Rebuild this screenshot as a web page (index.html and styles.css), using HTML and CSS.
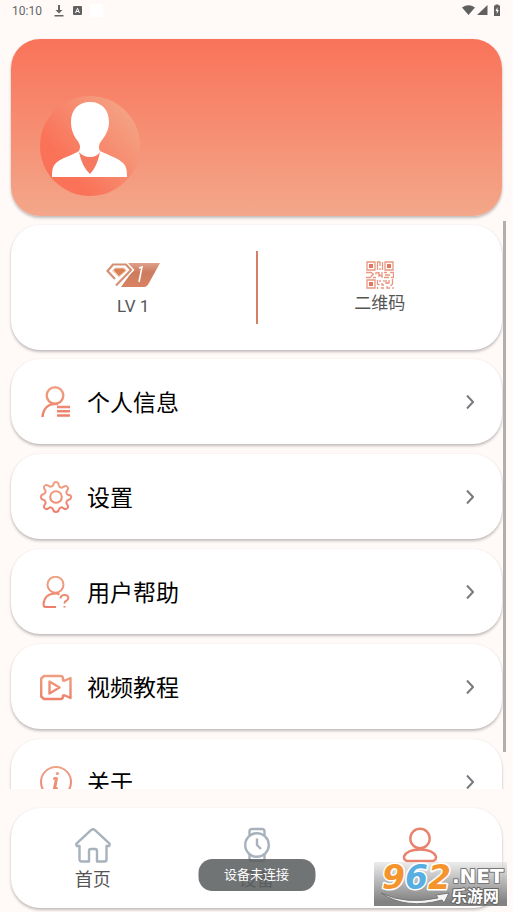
FILE: index.html
```html
<!DOCTYPE html>
<html lang="zh-CN">
<head>
<meta charset="utf-8">
<meta name="viewport" content="width=device-width, initial-scale=1">
<title>我的</title>
<link rel="stylesheet" href="styles.css">
</head>
<body>
<svg class="defs" width="0" height="0" aria-hidden="true">
  <defs>
    <linearGradient id="coral" gradientUnits="userSpaceOnUse" x1="0" y1="0" x2="0" y2="32"><stop offset="0" stop-color="#efa386"/><stop offset="1" stop-color="#ee7d69"/></linearGradient>
    <linearGradient id="disc" x1="0.2" y1="0.75" x2="0.9" y2="0.2"><stop offset="0.1" stop-color="#fa7359"/><stop offset="1" stop-color="#f4a183"/></linearGradient>
    <linearGradient id="badge" x1="0" y1="0" x2="0" y2="1"><stop offset="0" stop-color="#dfa08a"/><stop offset="0.4" stop-color="#cc7b5e"/><stop offset="1" stop-color="#d98363"/></linearGradient>
  </defs>
</svg>
<div class="app">
  <header class="status">
    <span class="time">10:10</span>
    <svg class="status-download" width="10" height="12" viewBox="0 0 10 12" fill="#666"><path d="M4 0h2v5h2.500L5 8.500 1.500 5H4zM.5 10h9v1.500h-9z"/></svg>
    <svg class="status-app" width="9" height="9" viewBox="0 0 9 9"><rect width="9" height="9" rx="1" fill="#606060"/><path d="M2.500 7 4.500 2.300 6.500 7M3.200 5.500h2.600" fill="none" stroke="#fff"/></svg>
    <span class="status-blank"></span>
    <svg class="status-system" width="39" height="13" viewBox="0 0 39 13" fill="#606060"><path d="M0 3.500Q6.500-1 13 3.500L6.500 11zM15 11 25.500 1v10z"/><path d="M33.500 1.500V.5h3v1H38V12h-6V1.500z"/><path d="M35.500 3 33.500 7h1.300v3l2-4h-1.300z" fill="#fff"/></svg>
  </header>

  <section class="card profile">
    <svg class="avatar" width="100" height="100" viewBox="0 0 100 100" role="img" aria-label="头像">
      <circle cx="50" cy="50" r="50" fill="url(#disc)"/>
      <path fill="#fff" d="M50 6C38 6 31 14 31 26c0 8 3 14 6 18 3 4 4 7 2 11-8 5-18 7-23 12-3 3-4 6-4 14h75c0-8-1-11-4-14-5-5-15-8-23-12-2-4-1-7 2-11 3-4 7-10 7-18C69 14 62 6 50 6z"/>
      <path fill="#f57a61" d="M39 56q4 5 11 5t10-5Q57 71 50 78 42 71 39 56z"/>
    </svg>
  </section>

  <main class="content">
    <div class="scroll">
      <section class="card summary">
        <div class="summary-item level">
          <svg width="54" height="24" viewBox="0 0 54 24" role="img" aria-label="等级 1">
            <path fill="url(#badge)" d="M22 0h32L43 20q-2 4-5 4H15l10-14z"/>
            <path d="M9 16 1.500 8 7 1.500h13L25 7 10 22.500" fill="none" stroke="#fff" stroke-width="5"/>
            <path d="M9 16 1.500 8 7 1.500h13L25 7 10 22.500" fill="none" stroke="#d78f75" stroke-width="2.200"/>
            <path d="M6 8 9 4.500h9L21 7.500l-8 7z" fill="#f3d2c4"/>
            <path d="M7.500 7 9.500 5.500h8l2 2L13 13z" fill="#db8150"/>
            <path d="m33 5 3-1-3 15" fill="none" stroke="#fff" stroke-width="1.600"/>
          </svg>
          <span>LV 1</span>
        </div>
        <div class="divider"></div>
        <a class="summary-item qr" href="#qr">
          <svg width="28" height="28" viewBox="0 0 28 28" fill="none" stroke="#e99780" stroke-width="1.300">
            <path d="M1 1h8v8H1zM19 1h8v8h-8zM1 19h8v8H1z"/>
            <path d="M4 4h2v2H4zM22 4h2v2h-2zM4 22h2v2H4z" stroke="#e2765e" stroke-width="2"/>
            <path d="M11.500 9V1H14v4M16.500 1v8M14 7v2M0 11.500h5l3 2M10 11v2.500M0 16.500h4l3-3M7 16.500h3M13 11v5M11 11l5 5v-5M18 11.500h3M18 16.500h5M19 14h5M24 11.500h3.500v5H25M11.500 19v4l2 1M11.500 26v2M14 19v2M16 22v2h2M15 27h3M18 19v2M20 19v4M23 19v3h-3M26.500 18v5l-2 2M21 25v2h3M27 26v2"/>
          </svg>
          <span>二维码</span>
        </a>
      </section>

      <nav class="menu" aria-label="菜单">
        <a class="card row" href="#profile">
          <svg class="row-icon" viewBox="0 0 32 32"><circle cx="15" cy="9.500" r="8.300"/><path d="M2.500 31C3 23 8 18 14.500 18H18M17 21h13M17 25.300h13M17 29.500h13"/></svg>
          <span>个人信息</span>
          <svg class="chevron" viewBox="0 0 8 14"><path d="m1 .5 6 6.500-6 6.500"/></svg>
        </a>
        <a class="card row" href="#settings">
          <svg class="row-icon thin" viewBox="0 0 32 32"><circle cx="16" cy="16" r="5.800"/><path d="M13.200 4.200Q13.600 1 16 1t2.800 3.200q.5 2 2.300 2.400 1 .2 2.200-.7 2.400-1.700 3.600-.5l.7.700q1.200 1.200-.5 3.600-.9 1.200-.7 2.200.4 1.800 2.400 2.300Q31 13.600 31 16t-2.200 2.800q-2 .5-2.400 2.300-.2 1 .7 2.200 1.700 2.400.5 3.600l-.7.700q-1.200 1.200-3.600-.5-1.200-.9-2.200-.7-1.800.4-2.300 2.400Q18.400 31 16 31t-2.800-2.200q-.5-2-2.300-2.400-1-.2-2.200.7-2.400 1.700-3.600.5l-.7-.7q-1.200-1.200.5-3.600.9-1.200.7-2.200-.4-1.800-2.400-2.300Q1 18.400 1 16t2.200-2.800q2-.5 2.400-2.300.2-1-.7-2.200-1.700-2.400-.5-3.600l.7-.7q1.200-1.200 3.600.5 1.200.9 2.200.7 1.800-.4 2.300-1.400z"/></svg>
          <span>设置</span>
          <svg class="chevron" viewBox="0 0 8 14"><path d="m1 .5 6 6.500-6 6.500"/></svg>
        </a>
        <a class="card row" href="#help">
          <svg class="row-icon thin" viewBox="0 0 32 32"><circle cx="15.500" cy="8.700" r="8"/><path d="M16 31H6q-2.500 0-2.500-2.500C4 21 8 17.500 15.500 17.500q2 0 4 1M20.500 22.500q0-3.500 4-3.500 3.800 0 3.800 3 0 2-2.300 3-1.500.7-1.500 2.500M24.500 30v1.500"/></svg>
          <span>用户帮助</span>
          <svg class="chevron" viewBox="0 0 8 14"><path d="m1 .5 6 6.500-6 6.500"/></svg>
        </a>
        <a class="card row" href="#video">
          <svg class="row-icon" viewBox="0 0 32 32"><path d="M4 5h16.500q2.500 0 2.500 2.500v2h2L30.500 7v20L25 24.500h-2v1Q23 28 20.500 28H4l-2.800-2.500v-18zM9.500 10.500v12l10-6z"/></svg>
          <span>视频教程</span>
          <svg class="chevron" viewBox="0 0 8 14"><path d="m1 .5 6 6.500-6 6.500"/></svg>
        </a>
        <a class="card row" href="#about">
          <svg class="row-icon thin" viewBox="0 0 32 32"><circle cx="16" cy="16" r="15"/><path stroke-width="3" stroke-linecap="round" d="M14.500 12.500h2L14.500 22.500h2M17.300 7.500h.2"/></svg>
          <span>关于</span>
          <svg class="chevron" viewBox="0 0 8 14"><path d="m1 .5 6 6.500-6 6.500"/></svg>
        </a>
      </nav>
    </div>
    <div class="thumb"></div>
  </main>

  <nav class="card tabs" aria-label="主导航">
    <a class="tab" href="#home">
      <svg viewBox="0 0 36 36"><path d="M16 3.200q2-1.800 4 0l14 13q1.500 1.400 0 2.800h-2.500v13.500q0 2-2 2H22V24q0-2-2-2h-4q-2 0-2 2v10.500H6.500q-2 0-2-2V19H2q-1.500-1.400 0-2.800z"/></svg>
      <span>首页</span>
    </a>
    <a class="tab" href="#device">
      <svg viewBox="0 0 36 36"><circle cx="18" cy="18" r="11.800"/><path d="M10.500 8.500V4.500q0-2.500 2.500-2.500h10q2.500 0 2.500 2.500v4M10.500 27.500v4q0 2.500 2.500 2.500h10q2.500 0 2.500-2.500v-4M18 11.500V18l4 4"/></svg>
      <span>设备</span>
    </a>
    <a class="tab active" href="#me" aria-current="page" aria-label="我的">
      <svg viewBox="0 0 36 36"><circle cx="18" cy="11.500" r="9.700"/><path d="M5 34q-3.500-1-3-4.500C4 25 10 22.500 18 22.500s14 2.500 16 7q.5 3.500-3 4.500z"/></svg>
    </a>
  </nav>

  <div class="toast" role="status">设备未连接</div>

  <div class="watermark">
    <svg width="133" height="44" viewBox="0 0 133 44" role="img" aria-label="962.NET 乐游网">
      <path d="M7 31Q32 43 64 36l-2-3 13-2-5 10-2-3Q32 48 7 31z" fill="#f4f4f4" stroke="#777"/>
      <g class="mark-digits"><text x="8" y="27" fill="#f5942c">9</text><text x="31" y="27" fill="#57aee0">6</text><text x="54" y="27" fill="#f5942c">2</text></g>
      <text class="mark-net" x="78" y="21">.NET</text>
      <text class="mark-name" x="77" y="40">乐游网</text>
    </svg>
  </div>
</div>
</body>
</html>
```
FILE: styles.css
```css
* {
  box-sizing: border-box;
}

body {
  margin: 0;
  background: #fff9f8;
  font-family: Roboto, "Noto Sans CJK SC", sans-serif;
  color: #000;
}

a {
  color: inherit;
  text-decoration: none;
}

.defs {
  position: absolute;
}

.app {
  position: relative;
  display: flex;
  flex-direction: column;
  height: 100vh;
  overflow: hidden;
}

.status {
  display: flex;
  align-items: center;
  height: 21px;
  padding: 0 12px;
  margin-bottom: 18px;
  color: #666;
  font-size: 12px;
}

.status-download {
  margin-left: 12px;
}

.status-app {
  margin-left: 9px;
}

.status-blank {
  width: 13px;
  height: 13px;
  margin-left: 8px;
  background: #fff;
}

.status-system {
  margin-left: auto;
}

.card {
  margin: 0 11px;
  border-radius: 29px;
  background: #fff;
  box-shadow: 0 2px 3px rgba(0, 0, 0, 0.24), 0 0 2px rgba(0, 0, 0, 0.06);
}

.profile {
  flex: none;
  padding: 57px 29px 20px;
  background: linear-gradient(#f97359, #f3a78a);
}

.avatar {
  display: block;
}

.content {
  position: relative;
  flex: 1;
  min-height: 0;
}

.scroll {
  height: 100%;
  padding-top: 9px;
  overflow: hidden;
}

.thumb {
  position: absolute;
  top: 5px;
  right: 7px;
  bottom: 37px;
  width: 3px;
  background: #b1afae;
}

.summary {
  display: flex;
  height: 125px;
  margin-bottom: 9px;
}

.summary-item {
  display: flex;
  flex: 1;
  flex-direction: column;
  align-items: center;
  color: #555;
  font-size: 17px;
  line-height: 24px;
}

.level {
  gap: 7px;
  padding-top: 38px;
}

.qr {
  gap: 2px;
  padding-top: 36px;
}

.divider {
  width: 2px;
  margin: 26px 0;
  background: #d38069;
}

.menu {
  display: flex;
  flex-direction: column;
  gap: 10px;
}

.row {
  display: flex;
  align-items: center;
  height: 85px;
  padding: 0 28px 0 29px;
  font-size: 23px;
  line-height: 32px;
}

.row span {
  padding-top: 4px;
}

.row-icon {
  width: 32px;
  height: 32px;
  margin-right: 15px;
  fill: none;
  stroke: url(#coral);
  stroke-width: 2.4;
  stroke-linejoin: round;
}

.thin {
  stroke-width: 2;
}

.chevron {
  width: 8px;
  height: 14px;
  margin-left: auto;
  fill: none;
  stroke: #777a7e;
  stroke-width: 2;
}

.tabs {
  display: flex;
  flex: none;
  height: 100px;
  margin: 19px 11px 4px;
}

.tab {
  display: flex;
  flex: 1;
  flex-direction: column;
  align-items: center;
  gap: 4px;
  padding-top: 19px;
  color: #555;
  font-size: 18px;
  line-height: 26px;
}

.tab svg {
  width: 36px;
  height: 36px;
  fill: none;
  stroke: #a7b2bd;
  stroke-width: 2.4;
  stroke-linejoin: round;
}

.tab.active svg {
  stroke: #e9826d;
}

.toast {
  position: absolute;
  bottom: 21px;
  left: 50%;
  padding: 0 26px;
  border-radius: 14px;
  background: rgba(92, 95, 97, 0.87);
  color: #fff;
  font-size: 13px;
  line-height: 32px;
  white-space: nowrap;
  transform: translateX(-50%);
}

.watermark {
  position: absolute;
  right: 6px;
  bottom: 6px;
  background: linear-gradient(rgba(225, 225, 225, 0.6), #828282 90%);
}

.watermark svg {
  display: block;
  overflow: visible;
}

.watermark text {
  paint-order: stroke;
  stroke-linejoin: round;
}

.mark-digits {
  font: italic 700 33px "DejaVu Sans", sans-serif;
  stroke: #fff;
  stroke-width: 3px;
}

.mark-net {
  font: 700 20px "DejaVu Sans", sans-serif;
  fill: #fff;
  stroke: #777;
  stroke-width: 2px;
}

.mark-name {
  font: 700 16px "Noto Sans CJK SC", sans-serif;
  fill: #fff;
  stroke: #666;
  stroke-width: 2px;
}
```
